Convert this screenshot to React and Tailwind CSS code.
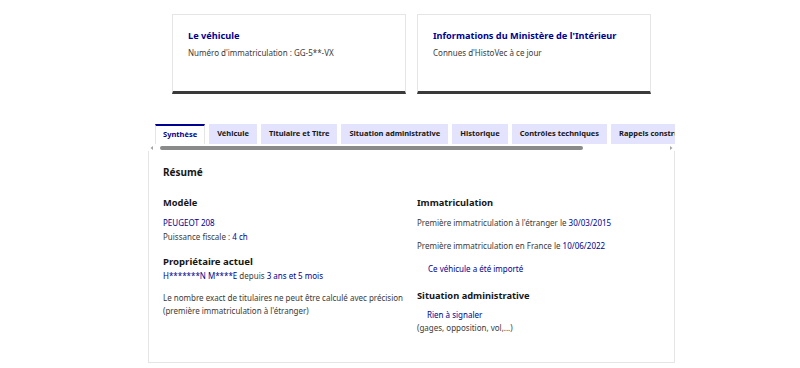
import React from "react";

const F = { fontFamily: '"Noto Sans", "Liberation Sans", sans-serif' };

function Card({ title, sub }) {
  return (
    <div className="w-[234px] h-[80px] border border-[#e5e5e5] border-b-[3px] border-b-[#3a3a3a] bg-white px-[15px] pt-[15px]">
      <div className="text-[9.2px] leading-[12px] font-bold text-[#000091]">{title}</div>
      <div className="mt-[5px] text-[8px] leading-[12px] text-[#3a3a3a]">{sub}</div>
    </div>
  );
}

const tabs = [
  "Véhicule",
  "Titulaire et Titre",
  "Situation administrative",
  "Historique",
  "Contrôles techniques",
  "Rappels constructeur",
];

export default function App() {
  return (
    <div className="w-[800px] h-[368px] bg-white overflow-hidden" style={F}>
      <div className="flex gap-[11px] ml-[172px] mt-[14px]">
        <Card title="Le véhicule" sub="Numéro d'immatriculation : GG-5**-VX" />
        <Card title="Informations du Ministère de l'Intérieur" sub="Connues d'HistoVec à ce jour" />
      </div>

      <div className="ml-[148px] w-[527px] mt-[30px]">
        <div className="overflow-hidden">
          <div className="flex gap-[4px] pl-[7px] whitespace-nowrap">
            <div className="h-[20px] px-[7px] flex items-center border-t-2 border-[#000091] border-x border-x-[#e5e5e5] bg-white text-[7.5px] font-bold text-[#000091] shrink-0">
              Synthèse
            </div>
            {tabs.map((t) => (
              <div key={t} className="h-[20px] px-[8px] flex items-center bg-[#e3e3fd] text-[7.5px] font-bold text-[#161616] shrink-0">
                {t}
              </div>
            ))}
          </div>
        </div>
        <div className="h-[7px] flex items-center">
          <svg width="6" height="6" viewBox="0 0 6 6" className="ml-[1px]">
            <path d="M4 1 L1.5 3 L4 5 Z" fill="#a3a3a3" />
          </svg>
          <div className="ml-[5px] w-[423px] h-[4px] rounded-full bg-[#8a8a8a]" />
          <div className="flex-1" />
          <svg width="6" height="6" viewBox="0 0 6 6" className="mr-[1px]">
            <path d="M2 1 L4.5 3 L2 5 Z" fill="#a3a3a3" />
          </svg>
        </div>
        <div className="h-[212px] border border-[#e5e5e5] border-t-0 px-[14px] pt-[13px]">
          <div className="text-[10px] leading-[16px] font-bold text-[#161616]">Résumé</div>
          <div className="flex mt-[15px]">
            <div className="w-[254px]">
              <div className="text-[9.3px] leading-[16px] font-bold text-[#161616]">Modèle</div>
              <div className="mt-[5px] text-[8px] leading-[14px] text-[#000091]">PEUGEOT 208</div>
              <div className="text-[8px] leading-[14px] text-[#3a3a3a]">
                Puissance fiscale : <span className="text-[#000091]">4 ch</span>
              </div>
              <div className="mt-[11px] text-[9.6px] leading-[14px] font-bold text-[#161616]">Propriétaire actuel</div>
              <div className="text-[8px] leading-[13px] text-[#000091]">
                H*******N M****E <span className="text-[#3a3a3a]">depuis</span> 3 ans et 5 mois
              </div>
              <div className="mt-[10px] text-[8px] leading-[12.5px] text-[#3a3a3a]">
                Le nombre exact de titulaires ne peut être calculé avec précision
                <br />
                (première immatriculation à l'étranger)
              </div>
            </div>
            <div className="flex-1">
              <div className="text-[9.3px] leading-[16px] font-bold text-[#161616]">Immatriculation</div>
              <div className="mt-[5px] text-[8px] leading-[14px] text-[#3a3a3a]">
                Première immatriculation à l'étranger le <span className="text-[#000091]">30/03/2015</span>
              </div>
              <div className="mt-[9px] text-[8px] leading-[14px] text-[#3a3a3a]">
                Première immatriculation en France le <span className="text-[#000091]">10/06/2022</span>
              </div>
              <div className="mt-[9px] pl-[11px] text-[8px] leading-[14px] text-[#000091]">
                Ce véhicule a été importé
              </div>
              <div className="mt-[12px] text-[9.3px] leading-[16px] font-bold text-[#161616]">Situation administrative</div>
              <div className="mt-[4px] pl-[10px] text-[8px] leading-[14px] text-[#000091]">Rien à signaler</div>
              <div className="text-[8px] leading-[12px] text-[#3a3a3a]">(gages, opposition, vol,...)</div>
            </div>
          </div>
        </div>
      </div>
    </div>
  );
}
